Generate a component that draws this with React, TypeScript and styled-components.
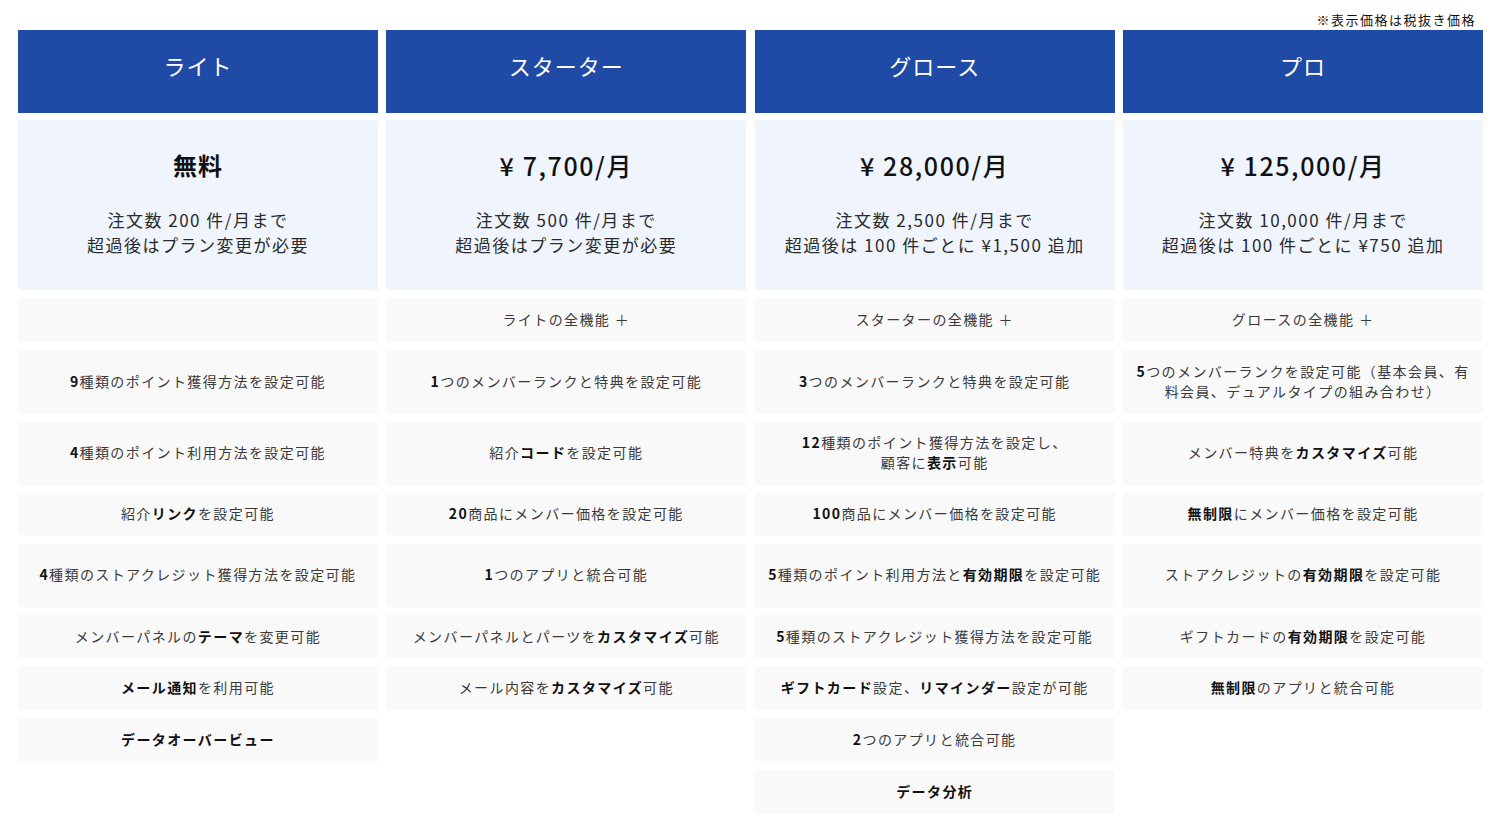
import React from "react";
import styled, { createGlobalStyle } from "styled-components";

const GlobalStyle = createGlobalStyle`
  body {
    margin: 0;
    background: #ffffff;
    font-family: "Noto Sans CJK JP", "Noto Sans", sans-serif;
    color: #333333;
  }
`;

const Page = styled.div`
  padding: 0 17px 0 18px;
  width: 1500px;
  box-sizing: border-box;
`;

const Note = styled.div`
  height: 30px;
  padding: 11px 7px 0 0;
  box-sizing: border-box;
  text-align: right;
  font-size: 13px;
  line-height: 18px;
  letter-spacing: 1.5px;
  color: #111111;
`;

const Grid = styled.div`
  display: grid;
  grid-template-columns: repeat(4, 1fr);
  column-gap: 8.5px;
  row-gap: 8.5px;
`;

const PlanHeader = styled.div`
  height: 83px;
  display: flex;
  align-items: center;
  justify-content: center;
  padding-bottom: 13px;
  box-sizing: border-box;
  background: #1f4ba6;
  color: #ffffff;
  font-size: 22px;
  line-height: 26px;
  letter-spacing: 1px;
  margin-bottom: -1.5px;
`;

const PriceCard = styled.div`
  height: 170px;
  background: #eff4fd;
  display: flex;
  flex-direction: column;
  align-items: center;
  padding-top: 27px;
  box-sizing: border-box;
`;

const Price = styled.div<{ $free?: boolean }>`
  font-size: ${(p) => (p.$free ? "24px" : "25px")};
  font-weight: ${(p) => (p.$free ? 700 : 500)};
  line-height: 36px;
  letter-spacing: ${(p) => (p.$free ? "1px" : "1.6px")};
  color: #111111;
`;

const Terms = styled.div`
  margin-top: 24px;
  font-size: 17px;
  line-height: 25px;
  letter-spacing: 1.5px;
  text-align: center;
  color: #2a2a2a;
`;

const Feature = styled.div<{ $h: number; $empty?: boolean }>`
  min-height: ${(p) => p.$h}px;
  background: ${(p) => (p.$empty ? "transparent" : "#f9f9f9")};
  display: flex;
  align-items: center;
  justify-content: center;
  text-align: center;
  padding: 0 8px 2px;
  box-sizing: border-box;
  font-size: 14px;
  line-height: 20px;
  letter-spacing: 1.4px;
  color: #3a3a3a;
`;

const FeatureText = styled.span`
  display: block;
`;

const B = styled.b`
  font-weight: 700;
  color: #111111;
`;

const plans = [
  { name: "ライト", price: "無料", free: true, orders: "注文数 200 件/月まで", over: "超過後はプラン変更が必要" },
  { name: "スターター", price: "¥ 7,700/月", orders: "注文数 500 件/月まで", over: "超過後はプラン変更が必要" },
  { name: "グロース", price: "¥ 28,000/月", orders: "注文数 2,500 件/月まで", over: "超過後は 100 件ごとに ¥1,500 追加" },
  { name: "プロ", price: "¥ 125,000/月", orders: "注文数 10,000 件/月まで", over: "超過後は 100 件ごとに ¥750 追加" },
];

type Cell = React.ReactNode | null | "blank";

// "blank" = grey box with no text, null = no box
const rows: { h: number; cells: Cell[] }[] = [
  {
    h: 43,
    cells: ["blank", "ライトの全機能 ＋", "スターターの全機能 ＋", "グロースの全機能 ＋"],
  },
  {
    h: 63,
    cells: [
      <><B>9</B>種類のポイント獲得方法を設定可能</>,
      <><B>1</B>つのメンバーランクと特典を設定可能</>,
      <><B>3</B>つのメンバーランクと特典を設定可能</>,
      <><B>5</B>つのメンバーランクを設定可能（基本会員、有<br />料会員、デュアルタイプの組み合わせ）</>,
    ],
  },
  {
    h: 63,
    cells: [
      <><B>4</B>種類のポイント利用方法を設定可能</>,
      <>紹介<B>コード</B>を設定可能</>,
      <><B>12</B>種類のポイント獲得方法を設定し、<br />顧客に<B>表示</B>可能</>,
      <>メンバー特典を<B>カスタマイズ</B>可能</>,
    ],
  },
  {
    h: 42,
    cells: [
      <>紹介<B>リンク</B>を設定可能</>,
      <><B>20</B>商品にメンバー価格を設定可能</>,
      <><B>100</B>商品にメンバー価格を設定可能</>,
      <><B>無制限</B>にメンバー価格を設定可能</>,
    ],
  },
  {
    h: 63,
    cells: [
      <><B>4</B>種類のストアクレジット獲得方法を設定可能</>,
      <><B>1</B>つのアプリと統合可能</>,
      <><B>5</B>種類のポイント利用方法と<B>有効期限</B>を設定可能</>,
      <>ストアクレジットの<B>有効期限</B>を設定可能</>,
    ],
  },
  {
    h: 43,
    cells: [
      <>メンバーパネルの<B>テーマ</B>を変更可能</>,
      <>メンバーパネルとパーツを<B>カスタマイズ</B>可能</>,
      <><B>5</B>種類のストアクレジット獲得方法を設定可能</>,
      <>ギフトカードの<B>有効期限</B>を設定可能</>,
    ],
  },
  {
    h: 43,
    cells: [
      <><B>メール通知</B>を利用可能</>,
      <>メール内容を<B>カスタマイズ</B>可能</>,
      <><B>ギフトカード</B>設定、<B>リマインダー</B>設定が可能</>,
      <><B>無制限</B>のアプリと統合可能</>,
    ],
  },
  {
    h: 43,
    cells: [<><B>データオーバービュー</B></>, null, <><B>2</B>つのアプリと統合可能</>, null],
  },
  {
    h: 44,
    cells: [null, null, <><B>データ分析</B></>, null],
  },
];

export default function App() {
  return (
    <Page>
      <GlobalStyle />
      <Note>※表示価格は税抜き価格</Note>
      <Grid>
        {plans.map((p) => (
          <PlanHeader key={p.name}>{p.name}</PlanHeader>
        ))}
        {plans.map((p) => (
          <PriceCard key={p.name + "-price"}>
            <Price $free={p.free}>{p.price}</Price>
            <Terms>
              {p.orders}
              <br />
              {p.over}
            </Terms>
          </PriceCard>
        ))}
        {rows.map((r, i) =>
          r.cells.map((c, j) => (
            <Feature key={i + "-" + j} $h={r.h} $empty={c === null}>
              {c === "blank" || c === null ? null : <FeatureText>{c}</FeatureText>}
            </Feature>
          ))
        )}
      </Grid>
    </Page>
  );
}
